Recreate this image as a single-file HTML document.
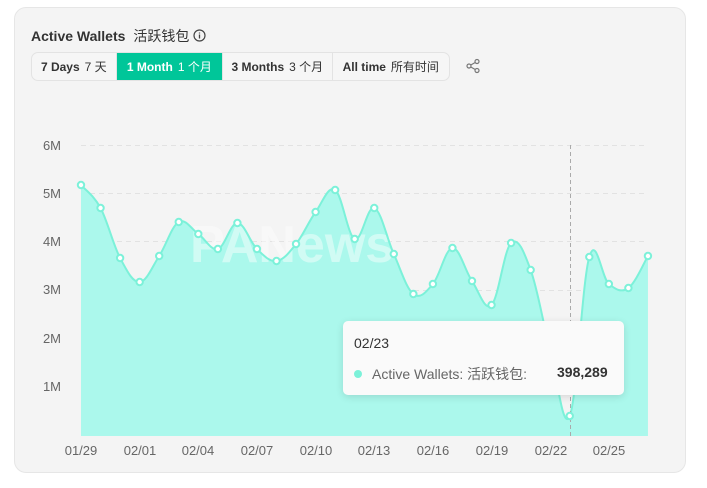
<!DOCTYPE html>
<html><head><meta charset="utf-8"><style>
body{margin:0;background:#fff;width:707px;height:488px;overflow:hidden;font-family:"Liberation Sans","Noto Sans CJK SC",sans-serif}
.card{position:absolute;left:14px;top:7px;width:670px;height:464px;background:#f4f4f4;border:1px solid #e6e6e6;border-radius:12px}
.title{position:absolute;left:31px;top:26px;font-size:14px;color:#333;font-weight:bold}
.title span{font-weight:normal;margin-left:8px}
.grp{position:absolute;left:31px;top:52px;width:417px;height:27px;border:1px solid #e3e3e3;border-radius:7px;background:#f6f6f6;display:flex;overflow:hidden;font-size:12px;color:#333;font-weight:bold}
.grp div{display:flex;align-items:center;justify-content:center;border-right:1px solid #e3e3e3}
.grp b{font-weight:normal;margin-left:5px}
.on{background:#00c699;color:#fff}
.tip{position:absolute;left:343px;top:321px;width:281px;height:74px;background:#fafafa;border-radius:5px;box-shadow:0 2px 8px rgba(0,0,0,.12)}
</style></head><body>
<div class="card"></div>
<div class="title">Active Wallets<span>活跃钱包</span> <svg width="13" height="13" viewBox="0 0 13 13" style="vertical-align:-1px"><circle cx="6.5" cy="6.5" r="5.5" fill="none" stroke="#444" stroke-width="1.2"/><path d="M6.5 5.5v4M6.5 3.5v1" stroke="#444" stroke-width="1.3"/></svg></div>
<div class="grp">
<div style="width:84px">7 Days<b>7 天</b></div>
<div class="on" style="width:106px">1 Month<b>1 个月</b></div>
<div style="width:109px">3 Months<b>3 个月</b></div>
<div style="width:117px;border:0">All time<b>所有时间</b></div>
</div>
<svg style="position:absolute;left:465px;top:58px" width="16" height="16" viewBox="0 0 16 16" fill="none" stroke="#777" stroke-width="1.2"><circle cx="12" cy="3.5" r="2"/><circle cx="4" cy="8" r="2"/><circle cx="12" cy="12.5" r="2"/><path d="M5.8 7 10.2 4.5M5.8 9 10.2 11.5"/></svg>
<svg id="ch" style="position:absolute;left:0;top:0" width="707" height="488">
<g stroke="#e2e2e2" stroke-dasharray="5,4"><line x1="81" x2="648" y1="145.5" y2="145.5"/><line x1="81" x2="648" y1="193.5" y2="193.5"/><line x1="81" x2="648" y1="241.5" y2="241.5"/><line x1="81" x2="648" y1="290.5" y2="290.5"/><line x1="81" x2="648" y1="338.5" y2="338.5"/><line x1="81" x2="648" y1="386.5" y2="386.5"/></g>
<g fill="#666" font-size="13" text-anchor="end"><text x="61" y="150">6M</text><text x="61" y="198">5M</text><text x="61" y="246">4M</text><text x="61" y="294">3M</text><text x="61" y="343">2M</text><text x="61" y="391">1M</text></g>
<g fill="#666" font-size="13" text-anchor="middle"><text x="81" y="455">01/29</text><text x="140" y="455">02/01</text><text x="198" y="455">02/04</text><text x="257" y="455">02/07</text><text x="316" y="455">02/10</text><text x="374" y="455">02/13</text><text x="433" y="455">02/16</text><text x="492" y="455">02/19</text><text x="551" y="455">02/22</text><text x="609" y="455">02/25</text></g>
<path id="area" fill="#abf8ec"/>
<text x="190" y="262" font-size="52" font-weight="bold" fill="#fff" opacity=".45">PANews</text>
<path id="line" fill="none" stroke="#7cf1d9" stroke-width="2"/>
<line x1="570.5" x2="570.5" y1="145" y2="436" stroke="#aaa" stroke-dasharray="4,3"/>
<g id="pts"></g>
</svg>
<div class="tip">
<div style="position:absolute;left:11px;top:14px;font-size:14px;color:#333">02/23</div>
<div style="position:absolute;left:11px;top:43px;font-size:14px;color:#666;white-space:nowrap"><span style="display:inline-block;width:8px;height:8px;border-radius:50%;background:#7cf1d9;margin-right:10px;vertical-align:1px"></span>Active Wallets: 活跃钱包: <b style="color:#333;position:absolute;left:203px">398,289</b></div>
</div>
<script>
var ys=[185,208,258,282,256,222,234,249,223,249,261,244,212,190,239,208,254,294,284,248,281,305,243,270,350,416,257,284,288,256];
var p=ys.map(function(y,i){return [81+i*19.55,y]});
var d="M"+p[0][0]+","+p[0][1];
for(var i=0;i<p.length-1;i++){var a=p[i-1]||p[i],b=p[i],c=p[i+1],e=p[i+2]||c,t=0.18;
d+=" C"+(b[0]+(c[0]-a[0])*t)+","+(b[1]+(c[1]-a[1])*t)+" "+(c[0]-(e[0]-b[0])*t)+","+(c[1]-(e[1]-b[1])*t)+" "+c[0]+","+c[1];}
document.getElementById("line").setAttribute("d",d);
document.getElementById("area").setAttribute("d",d+" L"+p[p.length-1][0]+",436 L81,436Z");
var g=document.getElementById("pts"),h="";
p.forEach(function(q){h+='<circle cx="'+q[0]+'" cy="'+q[1]+'" r="3.2" fill="#fff" stroke="#7cf1d9" stroke-width="2"/>'});
g.innerHTML=h;
</script>
</body></html>
